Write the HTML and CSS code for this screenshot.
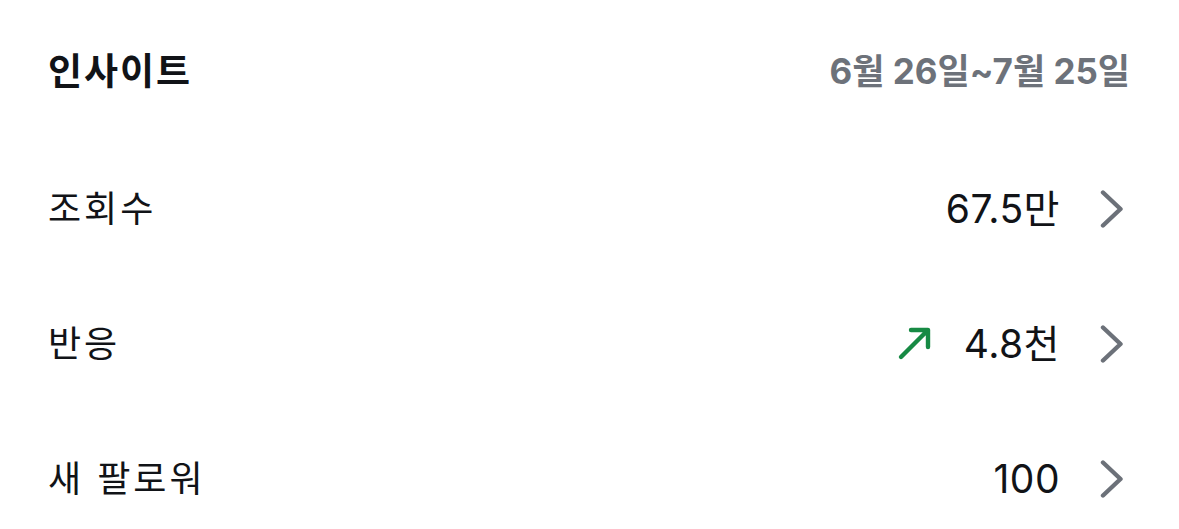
FILE: index.html
```html
<!DOCTYPE html>
<html lang="ko">
<head>
<meta charset="utf-8">
<link rel="stylesheet" href="styles.css">
</head>
<body>
<div class="card">
  <div class="header">
    <h1 class="title">인사이트</h1>
    <span class="range">6월 26일~7월 25일</span>
  </div>
  <div class="row">
    <span class="label">조회수</span>
    <span class="right">
      <span class="value">67.5만</span>
      <svg class="chev" width="24" height="40" viewBox="0 0 24 40"><path d="M3 3.5 L20.5 20 L3 36.5" fill="none" stroke="#6c7179" stroke-width="4.4" stroke-linecap="round" stroke-linejoin="round"/></svg>
    </span>
  </div>
  <div class="row">
    <span class="label">반응</span>
    <span class="right">
      <svg class="trend" width="36" height="36" viewBox="0 0 36 36"><path d="M4 31 L31 4 M14 4 H31 V21" fill="none" stroke="#178a44" stroke-width="4.4" stroke-linecap="round" stroke-linejoin="round"/></svg>
      <span class="value">4.8천</span>
      <svg class="chev" width="24" height="40" viewBox="0 0 24 40"><path d="M3 3.5 L20.5 20 L3 36.5" fill="none" stroke="#6c7179" stroke-width="4.4" stroke-linecap="round" stroke-linejoin="round"/></svg>
    </span>
  </div>
  <div class="row">
    <span class="label">새 팔로워</span>
    <span class="right">
      <span class="value">100</span>
      <svg class="chev" width="24" height="40" viewBox="0 0 24 40"><path d="M3 3.5 L20.5 20 L3 36.5" fill="none" stroke="#6c7179" stroke-width="4.4" stroke-linecap="round" stroke-linejoin="round"/></svg>
    </span>
  </div>
</div>
</body>
</html>
```
FILE: styles.css
```css
html, body {
  margin: 0;
  padding: 0;
  background: #ffffff;
}
body {
  font-family: "Inter", "Noto Sans CJK KR", sans-serif;
  color: #111317;
}
.card {
  padding: 1px 49px 0 48px;
}
.header {
  display: flex;
  justify-content: space-between;
  align-items: center;
  height: 140px;
}
.title {
  margin: 0;
  font-size: 37px;
  font-weight: 700;
  letter-spacing: 2px;
  line-height: 1;
}
.range {
  font-size: 35px;
  font-weight: 700;
  color: #6d727a;
  line-height: 1;
}
.row {
  display: flex;
  justify-content: space-between;
  align-items: center;
  height: 135px;
}
.label {
  font-size: 36px;
  letter-spacing: 3px;
  line-height: 1;
}
.right {
  display: flex;
  align-items: center;
}
.value {
  font-size: 39px;
  letter-spacing: 0.5px;
  line-height: 1;
}
.trend {
  margin-right: 31px;
}
.chev {
  margin-left: 40px;
  margin-right: 6px;
}
```
